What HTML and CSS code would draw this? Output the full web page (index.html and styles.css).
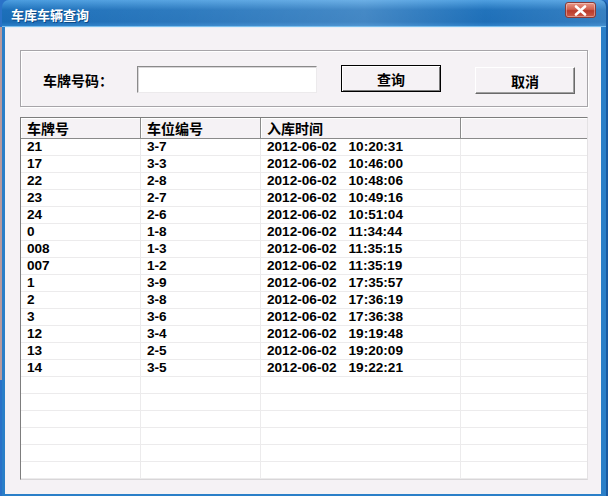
FILE: index.html
```html
<!DOCTYPE html>
<html>
<head>
<meta charset="utf-8">
<link rel="stylesheet" href="styles.css">
</head>
<body>
<div class="window">
  <div class="titlebar">
    <span class="title">车库车辆查询</span>
    <div class="close">
      <svg width="13" height="11" viewBox="0 0 13 11"><path d="M2 1.5 L11 9.5 M11 1.5 L2 9.5" stroke="#fff" stroke-width="2.6" stroke-linecap="round"/></svg>
    </div>
  </div>
  <div class="client">
    <div class="group">
      <span class="label">车牌号码：</span>
      <div class="input"></div>
      <button class="btn btn-default">查询</button>
      <button class="btn btn-cancel">取消</button>
    </div>
    <div class="list">
      <div class="row head">
        <div class="cell">车牌号</div>
        <div class="cell">车位编号</div>
        <div class="cell">入库时间</div>
        <div class="cell"></div>
      </div>
      <div class="rows">
        <div class="row"><div class="cell">21</div><div class="cell">3-7</div><div class="cell"><span class="date">2012-06-02</span><span>10:20:31</span></div><div class="cell"></div></div>
        <div class="row"><div class="cell">17</div><div class="cell">3-3</div><div class="cell"><span class="date">2012-06-02</span><span>10:46:00</span></div><div class="cell"></div></div>
        <div class="row"><div class="cell">22</div><div class="cell">2-8</div><div class="cell"><span class="date">2012-06-02</span><span>10:48:06</span></div><div class="cell"></div></div>
        <div class="row"><div class="cell">23</div><div class="cell">2-7</div><div class="cell"><span class="date">2012-06-02</span><span>10:49:16</span></div><div class="cell"></div></div>
        <div class="row"><div class="cell">24</div><div class="cell">2-6</div><div class="cell"><span class="date">2012-06-02</span><span>10:51:04</span></div><div class="cell"></div></div>
        <div class="row"><div class="cell">0</div><div class="cell">1-8</div><div class="cell"><span class="date">2012-06-02</span><span>11:34:44</span></div><div class="cell"></div></div>
        <div class="row"><div class="cell">008</div><div class="cell">1-3</div><div class="cell"><span class="date">2012-06-02</span><span>11:35:15</span></div><div class="cell"></div></div>
        <div class="row"><div class="cell">007</div><div class="cell">1-2</div><div class="cell"><span class="date">2012-06-02</span><span>11:35:19</span></div><div class="cell"></div></div>
        <div class="row"><div class="cell">1</div><div class="cell">3-9</div><div class="cell"><span class="date">2012-06-02</span><span>17:35:57</span></div><div class="cell"></div></div>
        <div class="row"><div class="cell">2</div><div class="cell">3-8</div><div class="cell"><span class="date">2012-06-02</span><span>17:36:19</span></div><div class="cell"></div></div>
        <div class="row"><div class="cell">3</div><div class="cell">3-6</div><div class="cell"><span class="date">2012-06-02</span><span>17:36:38</span></div><div class="cell"></div></div>
        <div class="row"><div class="cell">12</div><div class="cell">3-4</div><div class="cell"><span class="date">2012-06-02</span><span>19:19:48</span></div><div class="cell"></div></div>
        <div class="row"><div class="cell">13</div><div class="cell">2-5</div><div class="cell"><span class="date">2012-06-02</span><span>19:20:09</span></div><div class="cell"></div></div>
        <div class="row"><div class="cell">14</div><div class="cell">3-5</div><div class="cell"><span class="date">2012-06-02</span><span>19:22:21</span></div><div class="cell"></div></div>
        <div class="row"><div class="cell"></div><div class="cell"></div><div class="cell"></div><div class="cell"></div></div>
        <div class="row"><div class="cell"></div><div class="cell"></div><div class="cell"></div><div class="cell"></div></div>
        <div class="row"><div class="cell"></div><div class="cell"></div><div class="cell"></div><div class="cell"></div></div>
        <div class="row"><div class="cell"></div><div class="cell"></div><div class="cell"></div><div class="cell"></div></div>
        <div class="row"><div class="cell"></div><div class="cell"></div><div class="cell"></div><div class="cell"></div></div>
        <div class="row"><div class="cell"></div><div class="cell"></div><div class="cell"></div><div class="cell"></div></div>
      </div>
    </div>
  </div>
</div>
</body>
</html>
```
FILE: styles.css
```css
* { box-sizing: border-box; }
html, body {
  margin: 0;
  padding: 0;
}
body {
  width: 608px;
  height: 496px;
  overflow: hidden;
  background: linear-gradient(to bottom, #2a72c8 0, #2a72c8 27px, #b89a9c 27px, #b89a9c 380px, #2a72c8 380px);
  font-family: "Liberation Sans", "Noto Sans CJK SC", sans-serif;
  font-weight: bold;
  font-size: 13.6px;
  color: #000;
}
.window {
  margin-left: 2px;
  width: 606px;
  height: 496px;
  border-radius: 7px 7px 0 0;
  background: linear-gradient(to bottom, #4c9ee0 0, #1d70ba 10px, #1a6cb6 22px, #2a7fc8 26px, #2a7fc8 100%);
  display: flex;
  flex-direction: column;
  border-right: 2px solid #1a5aa0;
}
.titlebar {
  height: 27px;
  flex: none;
  display: flex;
  align-items: flex-start;
  padding: 0 10px 0 9px;
  border-radius: 7px 7px 0 0;
  background: linear-gradient(to right, rgba(255,255,255,0) 0, rgba(255,255,255,0.08) 30%, rgba(255,255,255,0.18) 60%, rgba(255,255,255,0.02) 80%, rgba(255,255,255,0.12) 100%);
  border-bottom: 1px solid #7cc0ee;
}
.title {
  color: #fff;
  font-size: 13px;
  line-height: 14px;
  margin-top: 8px;
  font-family: "Noto Sans CJK SC", sans-serif;
  font-weight: bold;
  text-shadow: 1px 1px 0 #0b4a86;
}
.close {
  margin-left: auto;
  margin-top: 2px;
  width: 31px;
  height: 16px;
  border-radius: 3px;
  border: 1px solid #8a3a36;
  background: linear-gradient(to bottom, #e89888 0, #d0604e 45%, #b83a2c 55%, #cc5a48 100%);
  display: flex;
  align-items: center;
  justify-content: center;
  box-shadow: inset 0 0 0 1px rgba(255,255,255,0.35);
}
.client {
  flex: 1;
  margin: 0 5px 3px 3px;
  background: #f5f2f5;
  padding: 22px 13px 14px 15px;
  display: flex;
  flex-direction: column;
  border-top: 1px solid #e8eef6;
}
.group {
  height: 57px;
  flex: none;
  border: 1px solid #a7a5a9;
  box-shadow: inset 1px 1px 0 #fff, 1px 1px 0 #fff;
  display: flex;
  align-items: flex-start;
  padding: 15px 0 0 22px;
}
.label {
  width: 94px;
  margin-top: 7px;
  line-height: 14px;
  font-size: 14px;
  font-family: "Noto Sans CJK SC", sans-serif;
}
.input {
  width: 180px;
  height: 27px;
  background: #fff;
  border-top: 1px solid #8a8a8a;
  border-left: 1px solid #8a8a8a;
  border-right: 1px solid #eceaec;
  border-bottom: 1px solid #eceaec;
  box-shadow: inset 1px 1px 0 #d8d6d8;
}
.btn {
  width: 100px;
  height: 27px;
  padding: 0;
  font: inherit;
  font-family: "Noto Sans CJK SC", sans-serif;
  font-size: 14px;
  line-height: 14px;
  background: #f5f2f5;
  color: #000;
}
.btn-default {
  margin-left: 24px;
  margin-top: -1px;
  border: 1px solid #000;
  box-shadow: inset 1px 1px 0 #fff, inset -1px -1px 0 #7a7a7a;
}
.btn-cancel {
  margin-left: 34px;
  margin-top: 1px;
  border-top: 1px solid #fff;
  border-left: 1px solid #fff;
  border-right: 1px solid #6a6a6a;
  border-bottom: 1px solid #6a6a6a;
  box-shadow: inset -1px -1px 0 #a0a0a0;
}
.list {
  margin-top: 10px;
  flex: 1;
  background: #fff;
  border-top: 1px solid #7d7d7d;
  border-left: 1px solid #7d7d7d;
  border-right: 1px solid #e4e2e4;
  border-bottom: 1px solid #d8d6d8;
  overflow: hidden;
  display: flex;
  flex-direction: column;
}
.row {
  display: grid;
  grid-template-columns: 120px 120px 200px 1fr;
  height: 17px;
  border-bottom: 1px solid #ecebec;
}
.cell {
  padding-left: 6px;
  line-height: 16px;
  border-right: 1px solid #ecebec;
  white-space: nowrap;
  overflow: hidden;
}
.row .cell:last-child { border-right: none; }
.head {
  height: 21px;
  flex: none;
  background: #f5f2f5;
  border-bottom: 1px solid #8a8a8a;
  box-shadow: inset 0 1px 0 #fff;
}
.head .cell {
  line-height: 20px;
  border-right: 1px solid #8a8a8a;
  box-shadow: inset 1px 0 0 #fff;
  font-family: "Noto Sans CJK SC", sans-serif;
  font-size: 14px;
}
.head .cell:last-child { border-right: none; }
.date {
  margin-right: 12px;
}
```
